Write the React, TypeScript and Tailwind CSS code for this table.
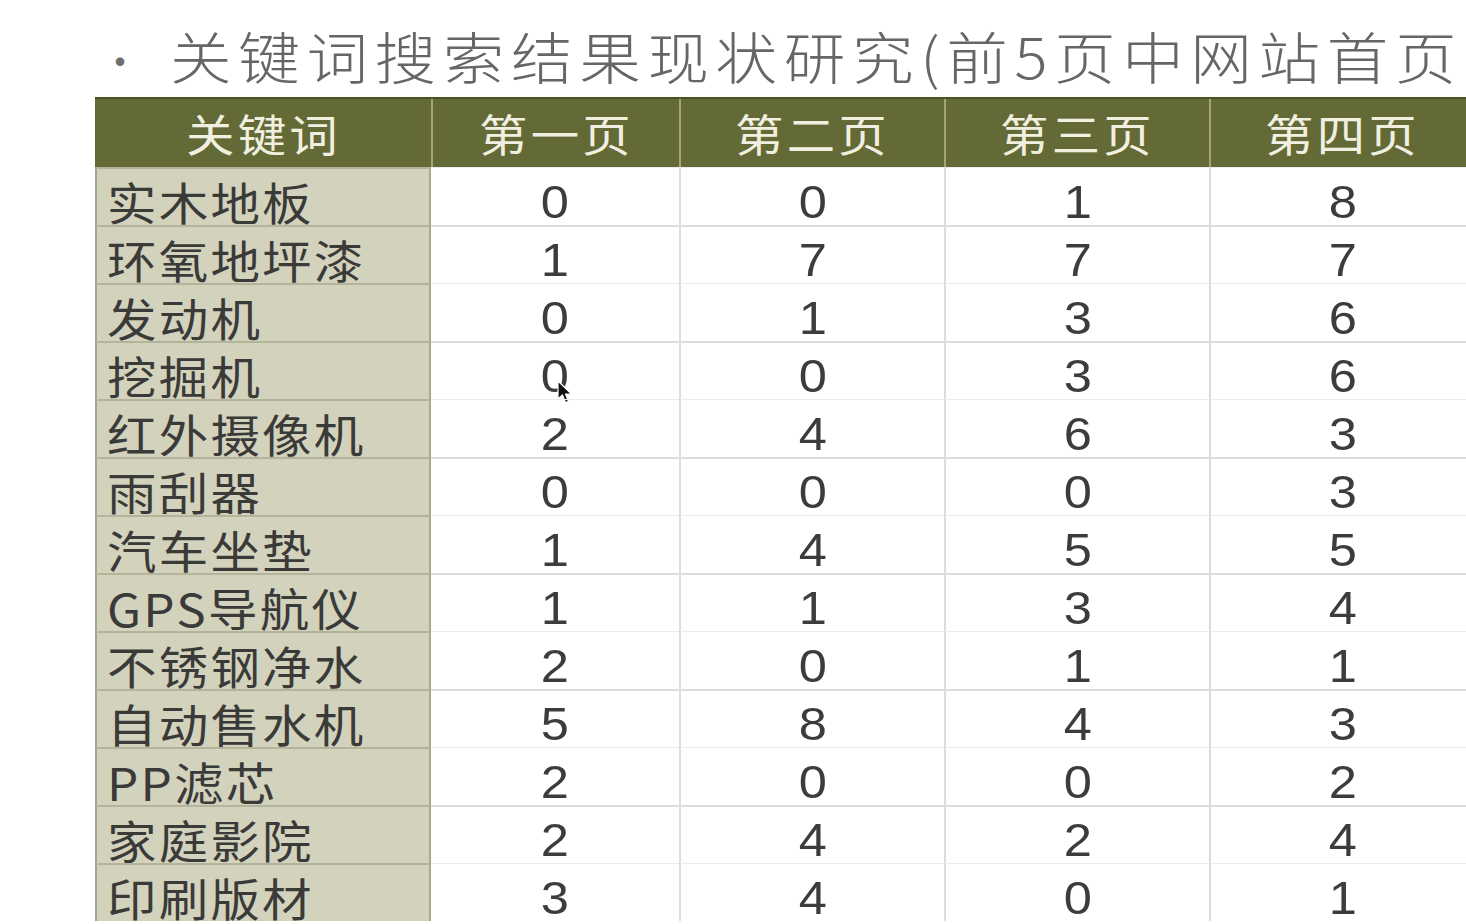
import React from 'react';

const headers = ['关键词', '第一页', '第二页', '第三页', '第四页', '第五页'];

const rows: [string, number[]][] = [
    ['实木地板', [0, 0, 1, 8, 9]],
    ['环氧地坪漆', [1, 7, 7, 7, 8]],
    ['发动机', [0, 1, 3, 6, 7]],
    ['挖掘机', [0, 0, 3, 6, 5]],
    ['红外摄像机', [2, 4, 6, 3, 6]],
    ['雨刮器', [0, 0, 0, 3, 4]],
    ['汽车坐垫', [1, 4, 5, 5, 6]],
    ['GPS导航仪', [1, 1, 3, 4, 5]],
    ['不锈钢净水', [2, 0, 1, 1, 2]],
    ['自动售水机', [5, 8, 4, 3, 4]],
    ['PP滤芯', [2, 0, 0, 2, 3]],
    ['家庭影院', [2, 4, 2, 4, 3]],
    ['印刷版材', [3, 4, 0, 1, 2]],
];

const colWidths = ['w-[336px]', 'w-[248px]', 'w-[265px]', 'w-[265px]', 'w-[265px]', 'w-[265px]'];

const cjk = { fontFamily: '"Noto Sans CJK SC", "Noto Sans", sans-serif' };
const num = { fontFamily: '"Liberation Sans", Arial, sans-serif' };

function Cursor() {
    return (
        <svg className="absolute left-[126px] top-[37px]" width="17" height="25" viewBox="0 0 17 25">
            <path d="M1 1 L1 19 L5.5 15 L8.5 22.5 L11.5 21.5 L8.5 14 L14.5 14 Z" fill="#111" stroke="#fff" strokeWidth="1.2" strokeLinejoin="round" />
        </svg>
    );
}

export default function App() {
    return (
        <div className="w-[1466px] h-[924px] overflow-hidden bg-white" style={cjk}>
            {/* Title */}
            <div className="flex items-center h-[97px] pl-[100px] pt-[28px] whitespace-nowrap">
                <span className="w-[70px] shrink-0 text-[40px] leading-none text-[#707070] -mt-[6px]">·</span>
                <span className="shrink-0 inline-block origin-left scale-x-[1.1] text-[56px] font-light leading-none tracking-[6px] text-[#666666] -mt-[16px]">
                    关键词搜索结果现状研究(前5页中网站首页数量)
                </span>
            </div>

            {/* Table */}
            <div className="ml-[95px] w-max">
                <div className="flex h-[70px] bg-[#636a36] border-t-2 border-[#4b5026] text-[#f1efe0]">
                    {headers.map((h, i) => (
                        <div
                            key={h}
                            className={`${colWidths[i]} shrink-0 flex items-center justify-center ${i > 0 ? 'border-l-2 border-[#a3a574]' : ''}`}
                        >
                            <span className="inline-block scale-x-[1.1] text-[44px] tracking-[3px]">{h}</span>
                        </div>
                    ))}
                </div>
                {rows.map(([name, vals], r) => (
                    <div key={name} className="flex h-[58px]">
                        <div className="w-[336px] shrink-0 bg-[#d3d2bd] border-t-2 border-[#b4b39c] border-r-2 border-r-[#a9a892] border-l-2 border-l-[#a5a48e] flex items-end pl-[10px] pb-[1px] overflow-hidden">
                            <span className="inline-block origin-left scale-x-[1.1] whitespace-nowrap text-[#3a3a38] text-[45px] leading-none tracking-[2px]">
                                {name}
                            </span>
                        </div>
                        {vals.map((v, c) => (
                            <div
                                key={c}
                                className={`${colWidths[c + 1]} shrink-0 relative flex items-center justify-center pt-[10px] text-[46px] leading-none text-[#3c3c3c] ${r % 2 === 1 ? 'border-t-2 border-[#dcdcdc]' : 'border-t border-[#ececec]'} ${c > 0 ? 'border-l-2 border-l-[#dddddd]' : ''}`}
                                style={num}
                            >
                                <span className="scale-x-110 inline-block">{v}</span>
                                {r === 3 && c === 0 && <Cursor />}
                            </div>
                        ))}
                    </div>
                ))}
            </div>
        </div>
    );
}
